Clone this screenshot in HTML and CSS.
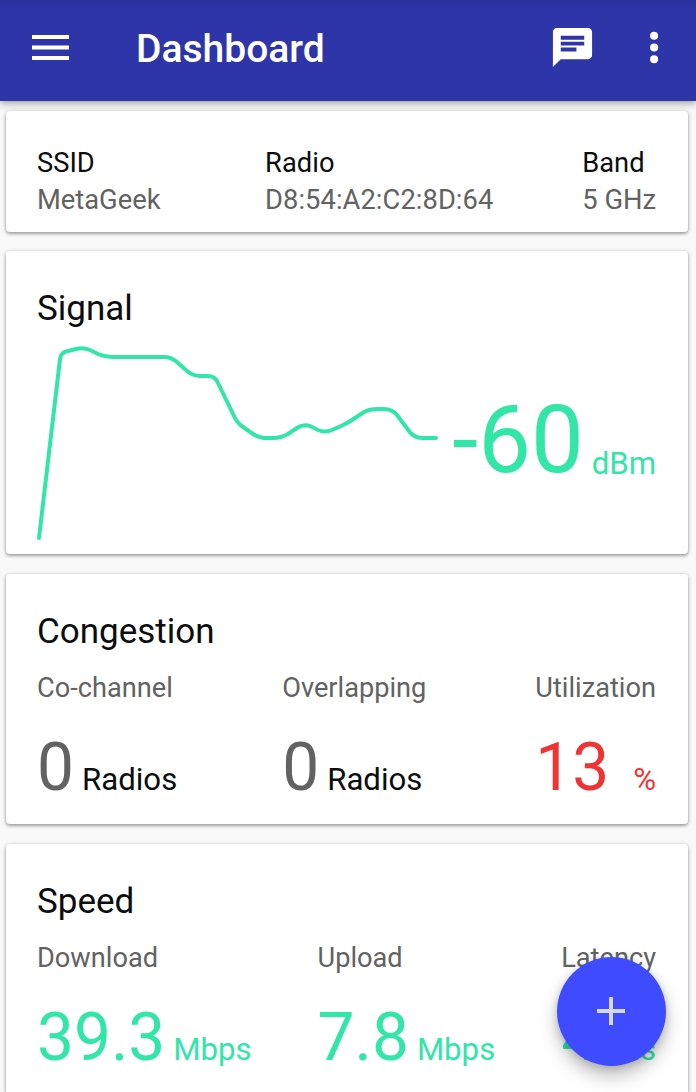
FILE: index.html
```html
<!DOCTYPE html>
<html lang="en">

<head>
    <meta charset="UTF-8">
    <meta name="viewport" content="width=device-width, initial-scale=1.0">
    <title>Dashboard</title>
    <link rel="stylesheet" href="styles.css">
</head>

<body>
    <header class="toolbar">
        <svg class="menu" viewBox="0 0 37 25" width="37" height="25">
            <path d="M0 0h37v4H0zM0 10.5h37v4H0zM0 21h37v4H0z" fill="#fff" />
        </svg>
        <h1>Dashboard</h1>
        <svg class="chat" viewBox="0 0 24 24" width="47" height="47">
            <path fill="#fff" d="M20 2H4c-1.1 0-1.99.9-1.99 2L2 22l4-4h14c1.1 0 2-.9 2-2V4c0-1.1-.9-2-2-2zM6 6h12v2H6V6zm8 8H6v-2h8v2zm4-3H6V9h12v2z" />
        </svg>
        <svg class="more" viewBox="0 0 24 24" width="47" height="47">
            <circle cx="11.8" cy="6" r="2.05" fill="#fff" />
            <circle cx="11.8" cy="12" r="2.05" fill="#fff" />
            <circle cx="11.8" cy="18" r="2.05" fill="#fff" />
        </svg>
    </header>

    <main>
        <section class="card network">
            <div class="ssid">
                <div class="name">SSID</div>
                <div class="detail">MetaGeek</div>
            </div>
            <div class="radio">
                <div class="name">Radio</div>
                <div class="detail">D8:54:A2:C2:8D:64</div>
            </div>
            <div class="band">
                <div class="name">Band</div>
                <div class="detail">5 GHz</div>
            </div>
        </section>

        <section class="card signal">
            <h2>Signal</h2>
            <div class="signal-row">
                <svg class="chart" viewBox="37 330 402 211" width="402" height="211">
                    <path d="M39 538L60 359Q61 352 68 351L76 349Q83 347 90 350L98 354Q105 357 112 357L164 357Q171 357 177 362L187 371Q193 376 200 376L208 376Q215 376 218 383L234 416Q237 423 243 427L253 434Q259 438 267 438L273 438Q281 438 288 434L297 428Q303 424 310 426L318 430Q325 433 332 430L341 426Q348 423 355 418L364 412Q370 409 378 409L384 409Q392 409 397 415L409 431Q414 438 422 438L436 438" />
                </svg>
                <div class="level">-60 <span class="unit">dBm</span></div>
            </div>
        </section>

        <section class="card congestion">
            <h2>Congestion</h2>
            <div class="stats">
                <div class="stat">
                    <div class="label">Co-channel</div>
                    <div class="value gray">0<span class="unit black">Radios</span></div>
                </div>
                <div class="stat">
                    <div class="label">Overlapping</div>
                    <div class="value gray">0<span class="unit black">Radios</span></div>
                </div>
                <div class="stat">
                    <div class="label">Utilization</div>
                    <div class="value red spread">13<span class="unit">%</span></div>
                </div>
            </div>
        </section>

        <section class="card speed">
            <h2>Speed</h2>
            <div class="stats">
                <div class="stat">
                    <div class="label">Download</div>
                    <div class="value green">39.3<span class="unit">Mbps</span></div>
                </div>
                <div class="stat">
                    <div class="label">Upload</div>
                    <div class="value green">7.8<span class="unit">Mbps</span></div>
                </div>
                <div class="stat">
                    <div class="label">Latency</div>
                    <div class="value green spread">4<span class="unit">ms</span></div>
                </div>
            </div>
        </section>
    </main>

    <button class="fab" aria-label="Add">
        <svg viewBox="0 0 28 28" width="28" height="28">
            <path d="M12 0h4v12h12v4H16v12h-4V16H0v-4h12z" fill="#d4d7ff" />
        </svg>
    </button>
</body>

</html>
```
FILE: styles.css
```css
* {
    box-sizing: border-box;
}

body {
    margin: 0;
    background: #f9f9f9;
    color: #0c0d0f;
    font-family: Roboto, sans-serif;
}

svg {
    display: block;
}

/* toolbar */
.toolbar {
    position: relative;
    z-index: 1;
    display: flex;
    align-items: center;
    height: 101px;
    padding: 0 18px 7px 32px;
    background: linear-gradient(#2b3199, #2e35a9 10px);
    box-shadow: 0 2px 8px rgba(0, 0, 0, .4);
}

h1 {
    flex: 1;
    margin: 3px 0 0 67px;
    color: #fff;
    font-size: 39px;
    font-weight: 500;
    line-height: 48px;
}

.more {
    margin-left: 35px;
}

/* cards */
main {
    padding: 10px 8px 0 6px;
}

.card {
    margin-bottom: 19px;
    padding: 37px 32px 0 31px;
    background: #fff;
    border-radius: 4px;
    box-shadow: 0 1px 4px rgba(0, 0, 0, .3), 0 2px 3px rgba(0, 0, 0, .18);
}

h2 {
    margin: 0;
    font-size: 35px;
    font-weight: 400;
    line-height: 42px;
}

.network {
    display: flex;
    height: 121px;
    padding-top: 34px;
    font-size: 27.3px;
    line-height: 37px;
}

.ssid {
    width: 228px;
}

.radio {
    flex: 1;
    letter-spacing: .07px;
}

.detail,
.label {
    color: #626262;
}

.signal {
    height: 303px;
    margin-bottom: 20px;
}

.signal-row {
    display: flex;
    justify-content: space-between;
}

.chart path {
    fill: none;
    stroke: #32e6a8;
    stroke-width: 4;
    stroke-linecap: round;
}

.level {
    margin-top: 55px;
    color: #32e6a8;
    font-size: 94px;
    line-height: 110px;
    white-space: nowrap;
    word-spacing: -15.5px;
}

.level .unit {
    vertical-align: -2px;
}

.unit {
    font-size: 31.2px;
}

.congestion {
    height: 250px;
    margin-bottom: 20px;
}

.speed {
    height: 248px;
    margin-bottom: 0;
    border-radius: 4px 4px 0 0;
}

.stats {
    display: flex;
    justify-content: space-between;
    margin-top: 19px;
}

.label {
    font-size: 27.2px;
    line-height: 32px;
}

.value {
    display: flex;
    align-items: baseline;
    gap: 8px;
    margin-top: 25px;
    font-size: 65.8px;
    line-height: 77px;
}

.congestion .stat:nth-child(2) {
    margin-left: -4px;
}

.spread {
    justify-content: space-between;
}

.gray {
    color: #626262;
}

.black {
    color: #0c0d0f;
}

.red {
    color: #f03434;
}

.green {
    color: #32e6a8;
}

/* add button */
.fab {
    position: fixed;
    right: 30px;
    bottom: 26.5px;
    display: flex;
    align-items: center;
    justify-content: center;
    width: 109px;
    height: 109px;
    padding: 0 1px 0 0;
    border: 0;
    border-radius: 50%;
    background: #3f4bff;
    box-shadow: 0 10px 18px rgba(0, 0, 0, .25), 0 2px 8px rgba(0, 0, 0, .16);
}
```
